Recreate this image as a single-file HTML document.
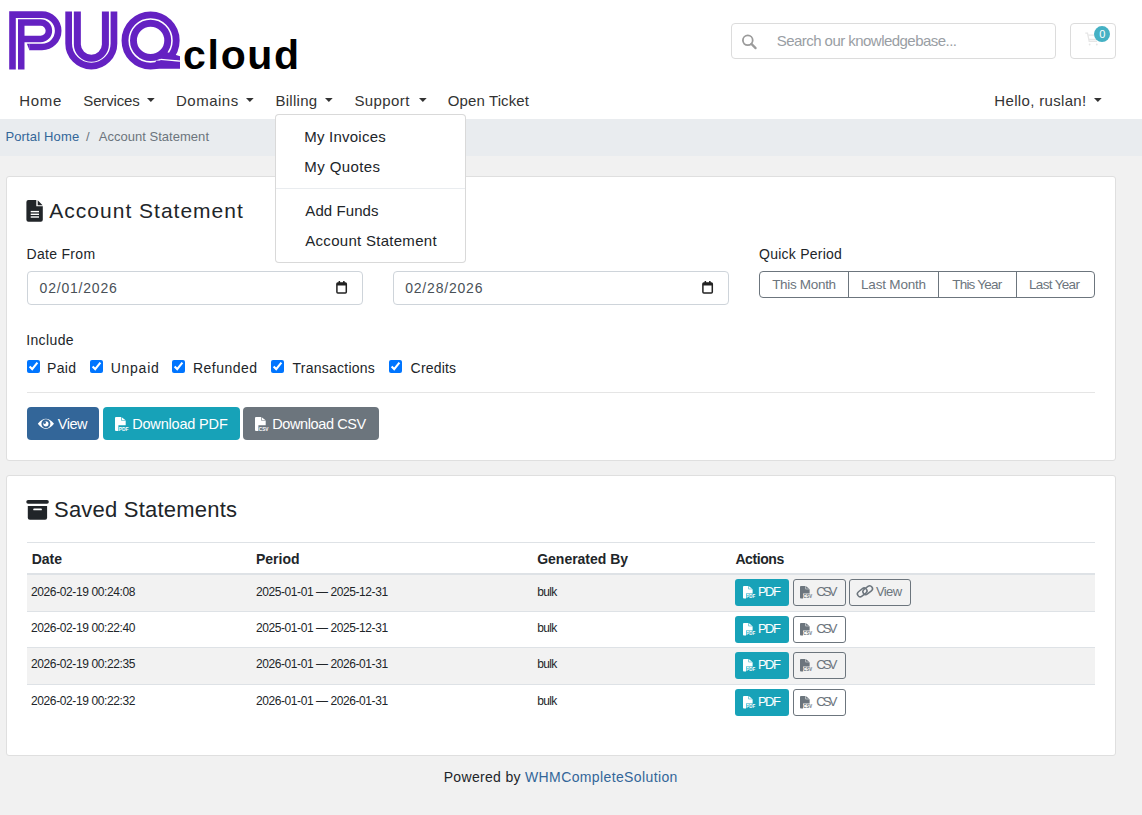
<!DOCTYPE html>
<html><head><meta charset="utf-8"><title>Account Statement</title>
<style>
html,body{margin:0;padding:0;}
body{width:1142px;height:815px;position:relative;overflow:hidden;background:#fff;font-family:'Liberation Sans', sans-serif;}
.t{position:absolute;white-space:pre;font-family:'Liberation Sans', sans-serif;}
svg{position:absolute;overflow:visible}
</style></head><body>
<div style="position:absolute;left:0px;top:119px;width:1142px;height:37px;background:#e9ecef"></div>
<div style="position:absolute;left:0px;top:156px;width:1142px;height:659px;background:#f1f1f1"></div>
<div style="position:absolute;left:6px;top:176px;width:1110px;height:285px;background:#fff;border:1px solid #dfdfdf;border-radius:3px;box-sizing:border-box"></div>
<div style="position:absolute;left:6px;top:475px;width:1110px;height:281px;background:#fff;border:1px solid #dfdfdf;border-radius:3px;box-sizing:border-box"></div>
<svg style="left:0;top:0" width="310" height="80" viewBox="0 0 310 80">
<g fill="none" stroke="#6421c2" stroke-linejoin="miter">
<path d="M12.5 69.5 V14.6 H42 A16.2 16.2 0 0 1 42 47 H29.3" stroke-width="6.6"/>
<path d="M21.25 69.5 V22.4 H40.6 A8.3 8.3 0 0 1 40.6 39 H21.25" stroke-width="6.5"/>
<path d="M68.65 11.6 V43.4 A22.65 22.65 0 0 0 113.95 43.4 V11.6" stroke-width="6.7"/>
<path d="M77.35 11.6 V44.6 A14.03 14.03 0 0 0 105.4 44.6 V11.6" stroke-width="7"/>
<circle cx="150.6" cy="40.5" r="25.6" stroke-width="6.9"/>
<circle cx="150.6" cy="40.4" r="17.15" stroke-width="6.9"/>
</g>
<g fill="#6421c2">
<polygon points="26.9,43.7 29.4,43.7 29.4,50.3"/>
<polygon points="156,60.5 180,61.2 180,68.85 154,68.85"/>
<polygon points="162,49.5 167.4,52.2 180,56.2 180,61 159,59"/>
</g>
<path d="M160.6 59.3 L180.2 61.2" stroke="#fff" stroke-width="1.3" fill="none"/>
</svg>
<div style="position:absolute;left:731px;top:23px;width:325px;height:36px;border:1px solid #dcdcdc;border-radius:4px;box-sizing:border-box;background:#fff"></div>
<svg style="left:0;top:0" width="1142" height="60"><g stroke="#9b9b9b" stroke-width="1.8" fill="none"><circle cx="747.8" cy="40.3" r="4.9"/><line x1="751.4" y1="43.9" x2="755.6" y2="48.1" stroke-linecap="round" stroke-width="2.2"/></g></svg>
<div style="position:absolute;left:1070px;top:23px;width:46px;height:36px;border:1px solid #dcdcdc;border-radius:4px;box-sizing:border-box;background:#fff"></div>
<svg style="left:0;top:0" width="1142" height="60"><g stroke="#e6e6e6" stroke-width="1.3" fill="none"><path d="M1085.3 33.2 H1087.5 L1089.2 41.3 H1097"/><path d="M1088.2 35.2 H1097.5 L1096.3 39.5 H1089"/></g><circle cx="1089.6" cy="44.5" r="0.9" fill="#e6e6e6"/><circle cx="1096.8" cy="44.5" r="0.9" fill="#e6e6e6"/>
<circle cx="1102" cy="34.1" r="8" fill="#45b1c4"/></svg>
<svg style="left:147.2px;top:98px" width="8" height="4"><polygon points="0,0 7.7,0 3.85,3.9" fill="#333333"/></svg>
<svg style="left:245.9px;top:98px" width="8" height="4"><polygon points="0,0 7.7,0 3.85,3.9" fill="#333333"/></svg>
<svg style="left:325.3px;top:98px" width="8" height="4"><polygon points="0,0 7.7,0 3.85,3.9" fill="#333333"/></svg>
<svg style="left:418.6px;top:98px" width="8" height="4"><polygon points="0,0 7.7,0 3.85,3.9" fill="#333333"/></svg>
<svg style="left:1094.2px;top:98px" width="8" height="4"><polygon points="0,0 7.7,0 3.85,3.9" fill="#333333"/></svg>
<svg style="left:0;top:0" width="60" height="240"><path fill="#212529" d="M28.4 200 H36.3 V206.3 H42.8 V219.8 Q42.8 221.8 40.8 221.8 H28.4 Q26.4 221.8 26.4 219.8 V202 Q26.4 200 28.4 200 Z M37.7 200.3 L42.6 205.3 H37.7 Z"/>
<g fill="#fff"><rect x="30.7" y="210.9" width="8.3" height="1.4"/><rect x="30.7" y="213.6" width="8.3" height="1.4"/><rect x="30.7" y="216.3" width="8.3" height="1.4"/></g></svg>
<div style="position:absolute;left:27px;top:271px;width:336px;height:34px;border:1px solid #ced4da;border-radius:4px;box-sizing:border-box;background:#fff"></div>
<div style="position:absolute;left:393px;top:271px;width:336px;height:34px;border:1px solid #ced4da;border-radius:4px;box-sizing:border-box;background:#fff"></div>
<svg style="left:336.4px;top:281.3px" width="12" height="13"><rect x="0.9" y="1.9" width="9.4" height="10" rx="1" fill="none" stroke="#222" stroke-width="1.5"/><rect x="0.9" y="1.9" width="9.4" height="2.6" fill="#222"/><rect x="2.6" y="0" width="1.5" height="2" fill="#222"/><rect x="7.1" y="0" width="1.5" height="2" fill="#222"/></svg>
<svg style="left:702.4px;top:281.3px" width="12" height="13"><rect x="0.9" y="1.9" width="9.4" height="10" rx="1" fill="none" stroke="#222" stroke-width="1.5"/><rect x="0.9" y="1.9" width="9.4" height="2.6" fill="#222"/><rect x="2.6" y="0" width="1.5" height="2" fill="#222"/><rect x="7.1" y="0" width="1.5" height="2" fill="#222"/></svg>
<div style="position:absolute;left:759px;top:271px;width:336px;height:27px;border:1px solid #6c757d;border-radius:4px;box-sizing:border-box"></div>
<div style="position:absolute;left:848px;top:271px;width:1px;height:27px;background:#6c757d"></div>
<div style="position:absolute;left:938px;top:271px;width:1px;height:27px;background:#6c757d"></div>
<div style="position:absolute;left:1016px;top:271px;width:1px;height:27px;background:#6c757d"></div>
<input type="checkbox" checked style="position:absolute;left:23px;top:357px;margin:3px 3px 3px 4px;width:13px;height:13px">
<input type="checkbox" checked style="position:absolute;left:86px;top:357px;margin:3px 3px 3px 4px;width:13px;height:13px">
<input type="checkbox" checked style="position:absolute;left:168px;top:357px;margin:3px 3px 3px 4px;width:13px;height:13px">
<input type="checkbox" checked style="position:absolute;left:267px;top:357px;margin:3px 3px 3px 4px;width:13px;height:13px">
<input type="checkbox" checked style="position:absolute;left:385px;top:357px;margin:3px 3px 3px 4px;width:13px;height:13px">
<div style="position:absolute;left:27px;top:392px;width:1068px;height:1px;background:#e5e5e5"></div>
<div style="position:absolute;left:27px;top:407px;width:72px;height:33px;background:#336699;border-radius:4px"></div>
<div style="position:absolute;left:103px;top:407px;width:137px;height:33px;background:#17a2b8;border-radius:4px"></div>
<div style="position:absolute;left:243px;top:407px;width:136px;height:33px;background:#6c757d;border-radius:4px"></div>
<svg style="left:0;top:0" width="400" height="450">
<path fill="#fff" fill-rule="evenodd" d="M37.8 423.8 Q45.9 413.6 54 423.8 Q45.9 434 37.8 423.8 Z M45.9 419.3 A4.5 4.5 0 1 0 45.9 428.3 A4.5 4.5 0 1 0 45.9 419.3 Z"/>
<circle cx="45.9" cy="423.8" r="2.6" fill="#fff"/>
<circle cx="44.7" cy="422.6" r="1.3" fill="#336699"/>
</svg>
<svg style="left:114.9px;top:416.9px" width="16" height="16" viewBox="0 0 16 16"><g transform="scale(1.0)"><path fill="#fff" d="M1 0 H6.1 V3.6 H10.7 V8.2 H3.4 V13.9 H1 Q0 13.9 0 12.9 V1 Q0 0 1 0 Z M6.7 0.2 L10.3 3.1 H6.7 Z"/>
<text x="3.7" y="13.7" font-family="Liberation Sans" font-weight="bold" font-size="5.6" fill="#fff" textLength="9.8" lengthAdjust="spacingAndGlyphs">PDF</text></g></svg>
<svg style="left:254.6px;top:416.9px" width="16" height="16" viewBox="0 0 16 16"><g transform="scale(1.0)"><path fill="#fff" d="M1 0 H6.1 V3.6 H10.7 V8.2 H3.4 V13.9 H1 Q0 13.9 0 12.9 V1 Q0 0 1 0 Z M6.7 0.2 L10.3 3.1 H6.7 Z"/>
<text x="3.7" y="13.7" font-family="Liberation Sans" font-weight="bold" font-size="5.6" fill="#fff" textLength="9.8" lengthAdjust="spacingAndGlyphs">CSV</text></g></svg>
<svg style="left:0;top:0" width="60" height="540"><rect x="26.3" y="500" width="22.5" height="3.7" rx="1.8" fill="#212529"/>
<path fill="#212529" d="M27.8 506 H47.1 V517.7 Q47.1 519.7 45.1 519.7 H29.8 Q27.8 519.7 27.8 517.7 Z"/>
<rect x="33.2" y="508.4" width="8.7" height="1.9" rx="0.9" fill="#fff"/></svg>
<div style="position:absolute;left:27px;top:542px;width:1068px;height:1px;background:#dee2e6"></div>
<div style="position:absolute;left:27px;top:573px;width:1068px;height:2px;background:#dee2e6"></div>
<div style="position:absolute;left:27px;top:575px;width:1068px;height:36px;background:#f2f2f2"></div>
<div style="position:absolute;left:27px;top:611px;width:1068px;height:1px;background:#dee2e6"></div>
<div style="position:absolute;left:735px;top:579px;width:54px;height:27px;background:#17a2b8;border-radius:3px"></div>
<div style="position:absolute;left:793px;top:579px;width:53px;height:27px;border:1px solid #6c757d;border-radius:3px;box-sizing:border-box"></div>
<svg style="left:742.8px;top:585.6px" width="16" height="16" viewBox="0 0 16 16"><g transform="scale(0.9)"><path fill="#fff" d="M1 0 H6.1 V3.6 H10.7 V8.2 H3.4 V13.9 H1 Q0 13.9 0 12.9 V1 Q0 0 1 0 Z M6.7 0.2 L10.3 3.1 H6.7 Z"/>
<text x="3.7" y="13.7" font-family="Liberation Sans" font-weight="bold" font-size="5.6" fill="#fff" textLength="9.8" lengthAdjust="spacingAndGlyphs">PDF</text></g></svg>
<svg style="left:800.4px;top:585.6px" width="16" height="16" viewBox="0 0 16 16"><g transform="scale(0.9)"><path fill="#6c757d" d="M1 0 H6.1 V3.6 H10.7 V8.2 H3.4 V13.9 H1 Q0 13.9 0 12.9 V1 Q0 0 1 0 Z M6.7 0.2 L10.3 3.1 H6.7 Z"/>
<text x="3.7" y="13.7" font-family="Liberation Sans" font-weight="bold" font-size="5.6" fill="#6c757d" textLength="9.8" lengthAdjust="spacingAndGlyphs">CSV</text></g></svg>
<div style="position:absolute;left:849px;top:579px;width:62px;height:27px;border:1px solid #6c757d;border-radius:3px;box-sizing:border-box"></div>
<svg style="left:0;top:0" width="900" height="620"><g fill="none" stroke="#6c757d" stroke-width="1.5"><rect x="856.9" y="589.6" width="10.6" height="5.6" rx="2.8" transform="rotate(-38 862.2 592.4)"/><rect x="862.4" y="587.4" width="10.6" height="5.6" rx="2.8" transform="rotate(-38 867.7 590.2)"/></g></svg>
<div style="position:absolute;left:27px;top:647px;width:1068px;height:1px;background:#dee2e6"></div>
<div style="position:absolute;left:735px;top:616px;width:54px;height:27px;background:#17a2b8;border-radius:3px"></div>
<div style="position:absolute;left:793px;top:616px;width:53px;height:27px;border:1px solid #6c757d;border-radius:3px;box-sizing:border-box"></div>
<svg style="left:742.8px;top:622.6px" width="16" height="16" viewBox="0 0 16 16"><g transform="scale(0.9)"><path fill="#fff" d="M1 0 H6.1 V3.6 H10.7 V8.2 H3.4 V13.9 H1 Q0 13.9 0 12.9 V1 Q0 0 1 0 Z M6.7 0.2 L10.3 3.1 H6.7 Z"/>
<text x="3.7" y="13.7" font-family="Liberation Sans" font-weight="bold" font-size="5.6" fill="#fff" textLength="9.8" lengthAdjust="spacingAndGlyphs">PDF</text></g></svg>
<svg style="left:800.4px;top:622.6px" width="16" height="16" viewBox="0 0 16 16"><g transform="scale(0.9)"><path fill="#6c757d" d="M1 0 H6.1 V3.6 H10.7 V8.2 H3.4 V13.9 H1 Q0 13.9 0 12.9 V1 Q0 0 1 0 Z M6.7 0.2 L10.3 3.1 H6.7 Z"/>
<text x="3.7" y="13.7" font-family="Liberation Sans" font-weight="bold" font-size="5.6" fill="#6c757d" textLength="9.8" lengthAdjust="spacingAndGlyphs">CSV</text></g></svg>
<div style="position:absolute;left:27px;top:648px;width:1068px;height:36px;background:#f2f2f2"></div>
<div style="position:absolute;left:27px;top:684px;width:1068px;height:1px;background:#dee2e6"></div>
<div style="position:absolute;left:735px;top:652px;width:54px;height:27px;background:#17a2b8;border-radius:3px"></div>
<div style="position:absolute;left:793px;top:652px;width:53px;height:27px;border:1px solid #6c757d;border-radius:3px;box-sizing:border-box"></div>
<svg style="left:742.8px;top:658.6px" width="16" height="16" viewBox="0 0 16 16"><g transform="scale(0.9)"><path fill="#fff" d="M1 0 H6.1 V3.6 H10.7 V8.2 H3.4 V13.9 H1 Q0 13.9 0 12.9 V1 Q0 0 1 0 Z M6.7 0.2 L10.3 3.1 H6.7 Z"/>
<text x="3.7" y="13.7" font-family="Liberation Sans" font-weight="bold" font-size="5.6" fill="#fff" textLength="9.8" lengthAdjust="spacingAndGlyphs">PDF</text></g></svg>
<svg style="left:800.4px;top:658.6px" width="16" height="16" viewBox="0 0 16 16"><g transform="scale(0.9)"><path fill="#6c757d" d="M1 0 H6.1 V3.6 H10.7 V8.2 H3.4 V13.9 H1 Q0 13.9 0 12.9 V1 Q0 0 1 0 Z M6.7 0.2 L10.3 3.1 H6.7 Z"/>
<text x="3.7" y="13.7" font-family="Liberation Sans" font-weight="bold" font-size="5.6" fill="#6c757d" textLength="9.8" lengthAdjust="spacingAndGlyphs">CSV</text></g></svg>
<div style="position:absolute;left:735px;top:689px;width:54px;height:27px;background:#17a2b8;border-radius:3px"></div>
<div style="position:absolute;left:793px;top:689px;width:53px;height:27px;border:1px solid #6c757d;border-radius:3px;box-sizing:border-box"></div>
<svg style="left:742.8px;top:695.6px" width="16" height="16" viewBox="0 0 16 16"><g transform="scale(0.9)"><path fill="#fff" d="M1 0 H6.1 V3.6 H10.7 V8.2 H3.4 V13.9 H1 Q0 13.9 0 12.9 V1 Q0 0 1 0 Z M6.7 0.2 L10.3 3.1 H6.7 Z"/>
<text x="3.7" y="13.7" font-family="Liberation Sans" font-weight="bold" font-size="5.6" fill="#fff" textLength="9.8" lengthAdjust="spacingAndGlyphs">PDF</text></g></svg>
<svg style="left:800.4px;top:695.6px" width="16" height="16" viewBox="0 0 16 16"><g transform="scale(0.9)"><path fill="#6c757d" d="M1 0 H6.1 V3.6 H10.7 V8.2 H3.4 V13.9 H1 Q0 13.9 0 12.9 V1 Q0 0 1 0 Z M6.7 0.2 L10.3 3.1 H6.7 Z"/>
<text x="3.7" y="13.7" font-family="Liberation Sans" font-weight="bold" font-size="5.6" fill="#6c757d" textLength="9.8" lengthAdjust="spacingAndGlyphs">CSV</text></g></svg>
<div style="position:absolute;left:275px;top:114px;width:191px;height:149px;background:#fff;border:1px solid rgba(0,0,0,.15);border-radius:4px;box-sizing:border-box"></div>
<div style="position:absolute;left:276px;top:188px;width:189px;height:1px;background:#e9ecef"></div>
<div class="t" style="left:1099.20px;top:28.50px;font-size:11px;line-height:11px;letter-spacing:0.000px;color:#fff;font-weight:400;">0</div>
<div class="t" style="left:19.30px;top:93.00px;font-size:15px;line-height:15px;letter-spacing:0.677px;color:#333333;font-weight:400;">Home</div>
<div class="t" style="left:83.30px;top:93.00px;font-size:15px;line-height:15px;letter-spacing:-0.145px;color:#333333;font-weight:400;">Services</div>
<div class="t" style="left:176.00px;top:93.00px;font-size:15px;line-height:15px;letter-spacing:0.502px;color:#333333;font-weight:400;">Domains</div>
<div class="t" style="left:275.40px;top:93.00px;font-size:15px;line-height:15px;letter-spacing:0.287px;color:#333333;font-weight:400;">Billing</div>
<div class="t" style="left:354.40px;top:93.00px;font-size:15px;line-height:15px;letter-spacing:0.405px;color:#333333;font-weight:400;">Support</div>
<div class="t" style="left:447.80px;top:93.00px;font-size:15px;line-height:15px;letter-spacing:0.106px;color:#333333;font-weight:400;">Open Ticket</div>
<div class="t" style="left:994.30px;top:93.00px;font-size:15px;line-height:15px;letter-spacing:0.333px;color:#333333;font-weight:400;">Hello, ruslan!</div>
<div class="t" style="left:776.70px;top:32.80px;font-size:15px;line-height:15px;letter-spacing:-0.539px;color:#999ea4;font-weight:400;">Search our knowledgebase...</div>
<div class="t" style="left:5.40px;top:130.00px;font-size:13px;line-height:13px;letter-spacing:0.158px;color:#336699;font-weight:400;">Portal Home</div>
<div class="t" style="left:86.00px;top:130.00px;font-size:13px;line-height:13px;letter-spacing:0.000px;color:#6c757d;font-weight:400;">/</div>
<div class="t" style="left:98.70px;top:130.00px;font-size:13px;line-height:13px;letter-spacing:0.029px;color:#6c757d;font-weight:400;">Account Statement</div>
<div class="t" style="left:49.30px;top:200.40px;font-size:21px;line-height:21px;letter-spacing:1.006px;color:#212529;font-weight:400;">Account Statement</div>
<div class="t" style="left:26.60px;top:247.00px;font-size:14px;line-height:14px;letter-spacing:0.292px;color:#212529;font-weight:400;">Date From</div>
<div class="t" style="left:759.10px;top:247.00px;font-size:14px;line-height:14px;letter-spacing:0.231px;color:#212529;font-weight:400;">Quick Period</div>
<div class="t" style="left:39.60px;top:281.00px;font-size:14px;line-height:14px;letter-spacing:0.791px;color:#495057;font-weight:400;">02/01/2026</div>
<div class="t" style="left:405.20px;top:281.00px;font-size:14px;line-height:14px;letter-spacing:0.802px;color:#495057;font-weight:400;">02/28/2026</div>
<div class="t" style="left:772.20px;top:277.75px;font-size:13.5px;line-height:13.5px;letter-spacing:-0.319px;color:#6c757d;font-weight:400;">This Month</div>
<div class="t" style="left:861.00px;top:277.75px;font-size:13.5px;line-height:13.5px;letter-spacing:-0.187px;color:#6c757d;font-weight:400;">Last Month</div>
<div class="t" style="left:952.20px;top:277.75px;font-size:13.5px;line-height:13.5px;letter-spacing:-0.779px;color:#6c757d;font-weight:400;">This Year</div>
<div class="t" style="left:1029.00px;top:277.75px;font-size:13.5px;line-height:13.5px;letter-spacing:-0.669px;color:#6c757d;font-weight:400;">Last Year</div>
<div class="t" style="left:26.20px;top:333.40px;font-size:14px;line-height:14px;letter-spacing:0.374px;color:#212529;font-weight:400;">Include</div>
<div class="t" style="left:47.00px;top:361.00px;font-size:14px;line-height:14px;letter-spacing:0.355px;color:#212529;font-weight:400;">Paid</div>
<div class="t" style="left:110.70px;top:361.00px;font-size:14px;line-height:14px;letter-spacing:0.744px;color:#212529;font-weight:400;">Unpaid</div>
<div class="t" style="left:193.00px;top:361.00px;font-size:14px;line-height:14px;letter-spacing:0.467px;color:#212529;font-weight:400;">Refunded</div>
<div class="t" style="left:292.50px;top:361.00px;font-size:14px;line-height:14px;letter-spacing:0.243px;color:#212529;font-weight:400;">Transactions</div>
<div class="t" style="left:410.60px;top:361.00px;font-size:14px;line-height:14px;letter-spacing:0.176px;color:#212529;font-weight:400;">Credits</div>
<div class="t" style="left:57.70px;top:416.75px;font-size:14.5px;line-height:14.5px;letter-spacing:-0.465px;color:#fff;font-weight:400;">View</div>
<div class="t" style="left:132.20px;top:416.75px;font-size:14.5px;line-height:14.5px;letter-spacing:-0.178px;color:#fff;font-weight:400;">Download PDF</div>
<div class="t" style="left:272.20px;top:416.75px;font-size:14.5px;line-height:14.5px;letter-spacing:-0.387px;color:#fff;font-weight:400;">Download CSV</div>
<div class="t" style="left:54.00px;top:499.20px;font-size:22px;line-height:22px;letter-spacing:0.215px;color:#212529;font-weight:400;">Saved Statements</div>
<div class="t" style="left:31.80px;top:551.60px;font-size:14px;line-height:14px;letter-spacing:-0.053px;color:#212529;font-weight:700;">Date</div>
<div class="t" style="left:256.00px;top:551.60px;font-size:14px;line-height:14px;letter-spacing:-0.003px;color:#212529;font-weight:700;">Period</div>
<div class="t" style="left:537.20px;top:551.60px;font-size:14px;line-height:14px;letter-spacing:-0.013px;color:#212529;font-weight:700;">Generated By</div>
<div class="t" style="left:735.40px;top:551.60px;font-size:14px;line-height:14px;letter-spacing:-0.425px;color:#212529;font-weight:700;">Actions</div>
<div class="t" style="left:31.00px;top:585.60px;font-size:12px;line-height:12px;letter-spacing:-0.392px;color:#212529;font-weight:400;">2026-02-19 00:24:08</div>
<div class="t" style="left:256.00px;top:585.60px;font-size:12px;line-height:12px;letter-spacing:-0.425px;color:#212529;font-weight:400;">2025-01-01 — 2025-12-31</div>
<div class="t" style="left:537.20px;top:585.60px;font-size:12px;line-height:12px;letter-spacing:-0.671px;color:#212529;font-weight:400;">bulk</div>
<div class="t" style="left:757.90px;top:585.30px;font-size:13px;line-height:13px;letter-spacing:-1.480px;color:#fff;font-weight:400;">PDF</div>
<div class="t" style="left:816.30px;top:585.30px;font-size:13px;line-height:13px;letter-spacing:-2.830px;color:#6c757d;font-weight:400;">CSV</div>
<div class="t" style="left:875.90px;top:585.30px;font-size:13px;line-height:13px;letter-spacing:-0.585px;color:#6c757d;font-weight:400;">View</div>
<div class="t" style="left:31.00px;top:622.40px;font-size:12px;line-height:12px;letter-spacing:-0.392px;color:#212529;font-weight:400;">2026-02-19 00:22:40</div>
<div class="t" style="left:256.00px;top:622.40px;font-size:12px;line-height:12px;letter-spacing:-0.425px;color:#212529;font-weight:400;">2025-01-01 — 2025-12-31</div>
<div class="t" style="left:537.20px;top:622.40px;font-size:12px;line-height:12px;letter-spacing:-0.671px;color:#212529;font-weight:400;">bulk</div>
<div class="t" style="left:757.90px;top:622.30px;font-size:13px;line-height:13px;letter-spacing:-1.480px;color:#fff;font-weight:400;">PDF</div>
<div class="t" style="left:816.30px;top:622.30px;font-size:13px;line-height:13px;letter-spacing:-2.830px;color:#6c757d;font-weight:400;">CSV</div>
<div class="t" style="left:31.00px;top:658.10px;font-size:12px;line-height:12px;letter-spacing:-0.392px;color:#212529;font-weight:400;">2026-02-19 00:22:35</div>
<div class="t" style="left:256.00px;top:658.10px;font-size:12px;line-height:12px;letter-spacing:-0.425px;color:#212529;font-weight:400;">2026-01-01 — 2026-01-31</div>
<div class="t" style="left:537.20px;top:658.10px;font-size:12px;line-height:12px;letter-spacing:-0.671px;color:#212529;font-weight:400;">bulk</div>
<div class="t" style="left:757.90px;top:658.30px;font-size:13px;line-height:13px;letter-spacing:-1.480px;color:#fff;font-weight:400;">PDF</div>
<div class="t" style="left:816.30px;top:658.30px;font-size:13px;line-height:13px;letter-spacing:-2.830px;color:#6c757d;font-weight:400;">CSV</div>
<div class="t" style="left:31.00px;top:695.20px;font-size:12px;line-height:12px;letter-spacing:-0.392px;color:#212529;font-weight:400;">2026-02-19 00:22:32</div>
<div class="t" style="left:256.00px;top:695.20px;font-size:12px;line-height:12px;letter-spacing:-0.425px;color:#212529;font-weight:400;">2026-01-01 — 2026-01-31</div>
<div class="t" style="left:537.20px;top:695.20px;font-size:12px;line-height:12px;letter-spacing:-0.671px;color:#212529;font-weight:400;">bulk</div>
<div class="t" style="left:757.90px;top:695.30px;font-size:13px;line-height:13px;letter-spacing:-1.480px;color:#fff;font-weight:400;">PDF</div>
<div class="t" style="left:816.30px;top:695.30px;font-size:13px;line-height:13px;letter-spacing:-2.830px;color:#6c757d;font-weight:400;">CSV</div>
<div class="t" style="left:304.30px;top:129.00px;font-size:15px;line-height:15px;letter-spacing:0.221px;color:#212529;font-weight:400;">My Invoices</div>
<div class="t" style="left:304.30px;top:159.00px;font-size:15px;line-height:15px;letter-spacing:0.397px;color:#212529;font-weight:400;">My Quotes</div>
<div class="t" style="left:305.30px;top:203.00px;font-size:15px;line-height:15px;letter-spacing:0.082px;color:#212529;font-weight:400;">Add Funds</div>
<div class="t" style="left:305.30px;top:233.00px;font-size:15px;line-height:15px;letter-spacing:0.283px;color:#212529;font-weight:400;">Account Statement</div>
<div class="t" style="left:443.70px;top:770.00px;font-size:14px;line-height:14px;letter-spacing:0.319px;color:#212529;font-weight:400;">Powered by</div>
<div class="t" style="left:525.00px;top:770.00px;font-size:14px;line-height:14px;letter-spacing:0.383px;color:#336699;font-weight:400;">WHMCompleteSolution</div>
<div class="t" style="left:183.10px;top:34.50px;font-size:41px;line-height:41px;letter-spacing:1.679px;color:#000;font-weight:700;">cloud</div>
</body></html>
